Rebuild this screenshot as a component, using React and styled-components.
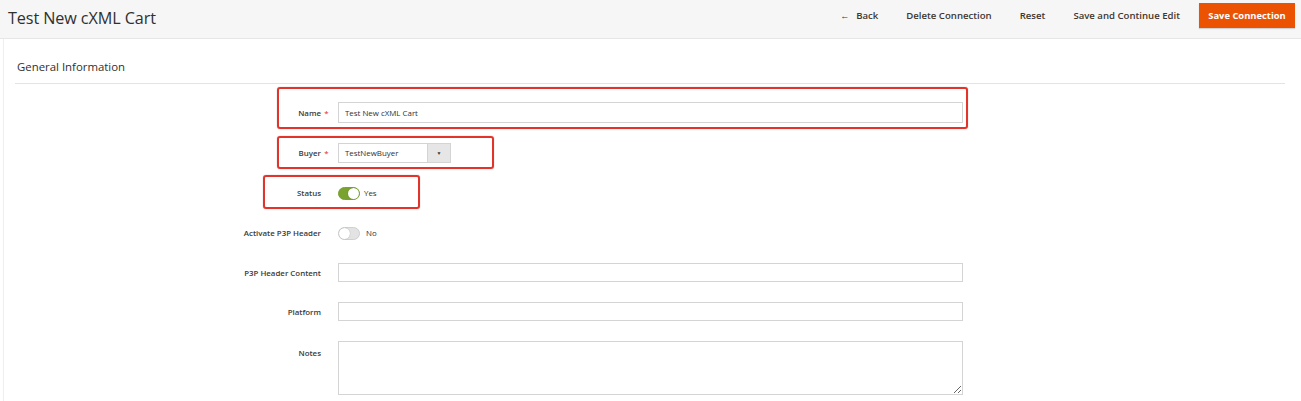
import React from "react";
import styled, { createGlobalStyle } from "styled-components";

const GlobalStyle = createGlobalStyle`
  html, body { margin: 0; padding: 0; background: #ffffff; }
  body { font-family: "Open Sans", "Noto Sans", Arial, sans-serif; color: #303030; }
  * { box-sizing: border-box; }
`;

const Page = styled.div`
  width: 1301px;
  height: 401px;
  overflow: hidden;
  background: #ffffff;
`;

const Header = styled.header`
  height: 39px;
  background: #f6f6f6;
  border-bottom: 1px solid #e6e6e6;
  display: flex;
  justify-content: space-between;
  align-items: flex-start;
  padding: 3px 6px 0 8px;
`;

const Title = styled.h1`
  margin: 0;
  padding-top: 3px;
  font-size: 16.2px;
  font-weight: 400;
  line-height: 25px;
  color: #303030;
  letter-spacing: -0.1px;
`;

const Actions = styled.div`
  display: flex;
  align-items: center;
  height: 25px;
`;

const TextButton = styled.button`
  border: 0;
  background: transparent;
  font-family: inherit;
  font-size: 9.6px;
  font-weight: 600;
  color: #41362f;
  padding: 0 14px;
  height: 25px;
  display: flex;
  align-items: center;
  gap: 7px;
  cursor: pointer;
`;

const Arrow = styled.span`
  font-size: 9px;
  font-weight: 400;
`;

const PrimaryButton = styled.button`
  border: 0;
  background: #eb5202;
  color: #ffffff;
  font-family: inherit;
  font-size: 9.4px;
  font-weight: 700;
  height: 25px;
  width: 96px;
  margin-left: 5px;
  padding: 0;
  box-shadow: 0 1px 1px rgba(0, 0, 0, 0.15);
  cursor: pointer;
`;

const Main = styled.main`
  margin-left: 3px;
  border-left: 1px solid #efefef;
  height: 362px;
`;

const SectionTitle = styled.div`
  margin: 0 16px 0 11px;
  padding: 20px 2px 8px;
  font-size: 11.4px;
  line-height: 16px;
  color: #303030;
  border-bottom: 1px solid #e3e3e3;
`;

const Form = styled.div`
  display: flex;
  flex-direction: column;
  gap: 20px;
  padding-top: 18px;
`;

const Field = styled.div`
  position: relative;
  display: grid;
  grid-template-columns: 328px 625px;
  column-gap: 6px;
  align-items: ${(p) => (p.$top ? "start" : "center")};
`;

const Label = styled.label`
  display: flex;
  justify-content: flex-end;
  font-size: 7.9px;
  font-weight: 600;
  color: #3a3a3a;
  padding-top: ${(p) => (p.$top ? "7px" : "0")};
`;

const Req = styled.span`
  width: 11px;
  text-align: center;
  color: #e22626;
  font-weight: 400;
`;

const Input = styled.input`
  width: ${(p) => p.$width || "625px"};
  height: ${(p) => p.$height || "19px"};
  border: 1px solid #d4d4d4;
  background: #ffffff;
  padding: 0 6px;
  font-family: inherit;
  font-size: 7.9px;
  color: #303030;
  outline: none;
`;

const TextArea = styled.textarea`
  width: 625px;
  height: 54px;
  border: 1px solid #d4d4d4;
  background: #ffffff;
  resize: vertical;
  font-family: inherit;
  font-size: 7.9px;
  outline: none;
  display: block;
`;

const Select = styled.div`
  width: 113px;
  height: 20px;
  border: 1px solid #d4d4d4;
  display: flex;
  background: #ffffff;
`;

const SelectValue = styled.span`
  flex: 1;
  display: flex;
  align-items: center;
  padding-left: 6px;
  font-size: 7.9px;
  color: #303030;
`;

const SelectArrow = styled.span`
  width: 23px;
  background: #e6e6e6;
  border-left: 1px solid #d4d4d4;
  display: flex;
  align-items: center;
  justify-content: center;
  font-size: 5px;
  color: #41362f;
`;

const ToggleWrap = styled.div`
  display: flex;
  align-items: center;
  gap: ${(p) => (p.$on ? "4px" : "6px")};
  height: 20px;
  font-size: 7.9px;
  color: #303030;
`;

const Toggle = styled.span`
  position: relative;
  width: 22px;
  height: 13px;
  border-radius: 7px;
  background: ${(p) => (p.$on ? "#79a22e" : "#e3e3e3")};
  border: 1px solid ${(p) => (p.$on ? "#79a22e" : "#cfcfcf")};
  &::after {
    content: "";
    position: absolute;
    top: 0;
    left: ${(p) => (p.$on ? "9px" : "0")};
    width: 11px;
    height: 11px;
    border-radius: 50%;
    background: #ffffff;
    box-shadow: 0 0 1px rgba(0, 0, 0, 0.35);
  }
`;

const Highlight = styled.span`
  position: absolute;
  left: ${(p) => p.$left}px;
  top: ${(p) => p.$top}px;
  width: ${(p) => p.$width}px;
  height: ${(p) => p.$height}px;
  border: 2px solid #e2342b;
  border-radius: 3px;
  box-shadow: 0 0 1px rgba(120, 20, 20, 0.5);
  pointer-events: none;
`;

export default function App() {
  return (
    <Page>
      <GlobalStyle />
      <Header>
        <Title>Test New cXML Cart</Title>
        <Actions>
          <TextButton>
            <Arrow>←</Arrow>
            Back
          </TextButton>
          <TextButton>Delete Connection</TextButton>
          <TextButton>Reset</TextButton>
          <TextButton>Save and Continue Edit</TextButton>
          <PrimaryButton>Save Connection</PrimaryButton>
        </Actions>
      </Header>
      <Main>
        <SectionTitle>General Information</SectionTitle>
        <Form>
          <Field>
            <Label>
              Name<Req>*</Req>
            </Label>
            <Input $height="21px" defaultValue="Test New cXML Cart" />
            <Highlight $left={273} $top={-15} $width={691} $height={42} />
          </Field>
          <Field>
            <Label>
              Buyer<Req>*</Req>
            </Label>
            <Select>
              <SelectValue>TestNewBuyer</SelectValue>
              <SelectArrow>▼</SelectArrow>
            </Select>
            <Highlight $left={273} $top={-7} $width={217} $height={33} />
          </Field>
          <Field>
            <Label>
              Status<Req />
            </Label>
            <ToggleWrap $on>
              <Toggle $on />
              Yes
            </ToggleWrap>
            <Highlight $left={259} $top={-8} $width={157} $height={34} />
          </Field>
          <Field>
            <Label>
              Activate P3P Header<Req />
            </Label>
            <ToggleWrap>
              <Toggle />
              No
            </ToggleWrap>
          </Field>
          <Field>
            <Label>
              P3P Header Content<Req />
            </Label>
            <Input />
          </Field>
          <Field>
            <Label>
              Platform<Req />
            </Label>
            <Input />
          </Field>
          <Field $top>
            <Label $top>
              Notes<Req />
            </Label>
            <TextArea />
          </Field>
        </Form>
      </Main>
    </Page>
  );
}
